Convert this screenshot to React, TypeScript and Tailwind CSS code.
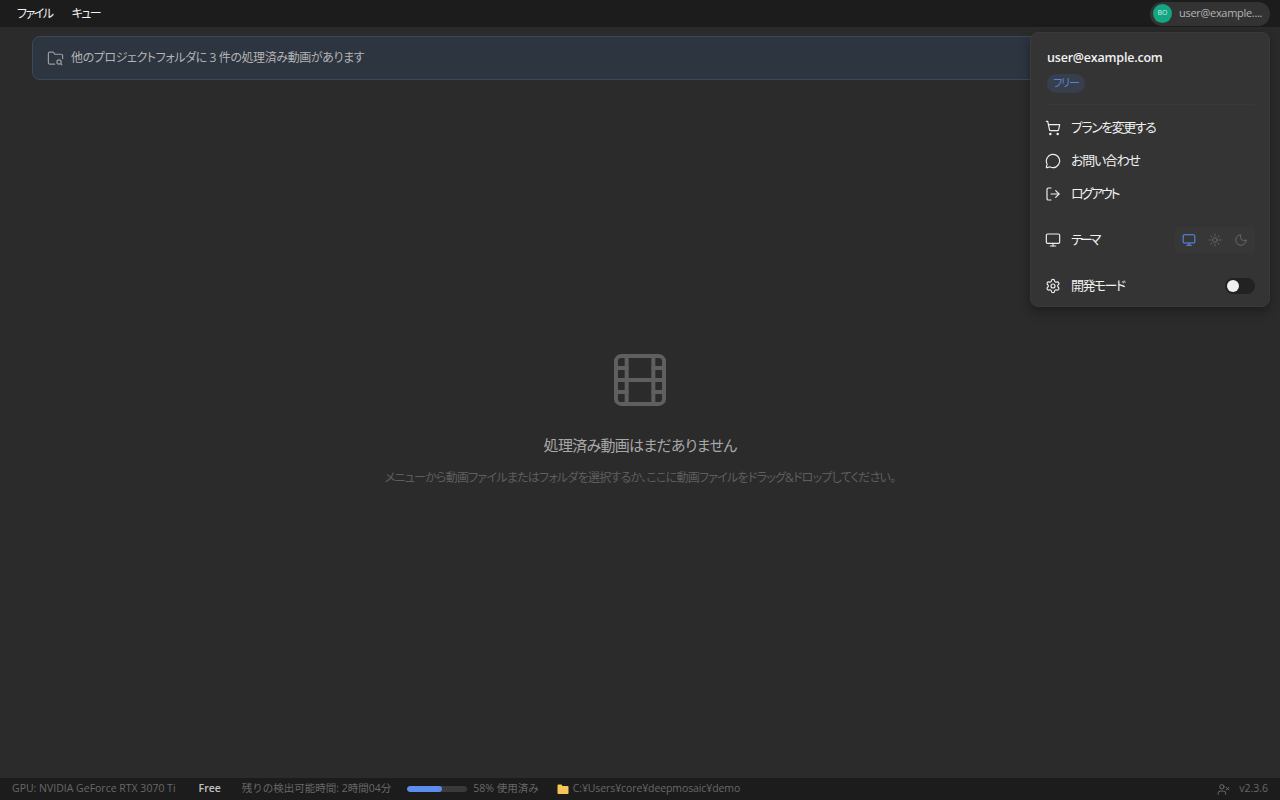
import { Film, FolderSearch, LogOut, MessageCircle, Monitor, Moon, Settings, ShoppingCart, Sun, UserX } from "lucide-react";

const font = "font-['Open_Sans','Noto_Sans_CJK_JP',sans-serif]";

function MenuRow({ icon, label, fit }: { icon: React.ReactNode; label: string; fit: string }) {
  return (
    <div className="flex h-[33px] items-center gap-[10px] text-[13px] text-[#f0f0f0] [font-feature-settings:'palt']">
      {icon}
      <span className={fit}>{label}</span>
    </div>
  );
}

export default function App() {
  return (
    <div className={`relative flex h-[800px] w-[1280px] flex-col overflow-hidden bg-[#2b2b2b] ${font}`}>
      <header className="flex h-[27px] shrink-0 items-center justify-between bg-[#1c1c1c] pl-[17px] pr-[10px]">
        <nav className="flex gap-[19px] text-[12px] tracking-[-1.5px] text-[#f2f2f2] [font-feature-settings:'palt']">
          <span>ファイル</span>
          <span>キュー</span>
        </nav>
        <div className="flex h-[24px] w-[120px] items-center gap-[7px] rounded-full bg-[#333333] pl-[3px]">
          <div className="flex h-[19px] w-[19px] items-center justify-center rounded-full bg-[#14a583] text-[7px] text-[#cfeee6]">
            BO
          </div>
          <span className="text-[11px] tracking-[-0.3px] text-[#b5b5b5]">user@example....</span>
        </div>
      </header>

      <main className="flex min-h-0 flex-1 flex-col px-[32px] pt-[9px]">
        <div className="flex h-[44px] shrink-0 items-center gap-[7px] rounded-lg border border-[#3a4a5e] bg-[#2d3540] pl-[14px] text-[12px] tracking-[-0.4px] text-[#b4b4b4] [font-feature-settings:'palt']">
          <FolderSearch className="h-[17px] w-[17px] text-[#9a9a9a]" strokeWidth={1.75} />
          <span>他のプロジェクトフォルダに 3 件の処理済み動画があります</span>
        </div>

        <div className="flex flex-col items-center pt-[268px]">
          <Film className="h-16 w-16 text-[#5f5f5f]" strokeWidth={1.5} />
          <h2 className="mt-[21px] text-[15px] leading-[24px] tracking-[-0.7px] text-[#a8a8a8] [font-feature-settings:'palt']">
            処理済み動画はまだありません
          </h2>
          <p className="mt-[12px] text-[12px] leading-[18px] tracking-[-0.75px] text-[#5e5e5e] [font-feature-settings:'palt']">
            メニューから動画ファイルまたはフォルダを選択するか、ここに動画ファイルをドラッグ&amp;ドロップしてください。
          </p>
        </div>
      </main>

      <footer className="flex h-[22px] shrink-0 items-center bg-[#1c1c1c] pl-[12px] pr-[12px] text-[10.5px] text-[#686868]">
        <span>GPU: NVIDIA GeForce RTX 3070 Ti</span>
        <span className="ml-[23px] font-semibold text-[#c4c4c4]">Free</span>
        <span className="ml-[21px]">残りの検出可能時間: 2時間04分</span>
        <div className="ml-[16px] h-[6px] w-[60px] overflow-hidden rounded-full bg-[#3a3a3a]">
          <div className="h-full w-[58%] rounded-full bg-[#5b8def]" />
        </div>
        <span className="ml-[6px]">58% 使用済み</span>
        <svg className="ml-[18px] h-[12px] w-[12px]" viewBox="0 0 12 12">
          <path d="M0.5 2.5a1 1 0 0 1 1-1h3l1 1.5h5a1 1 0 0 1 1 1v6a1 1 0 0 1-1 1h-9a1 1 0 0 1-1-1z" fill="#f6c65b" />
        </svg>
        <span className="ml-[4px] tracking-[-0.1px]">C:¥Users¥core¥deepmosaic¥demo</span>
        <div className="ml-auto flex items-center gap-[9px]">
          <UserX className="h-[13px] w-[13px] text-[#7c7c7c]" strokeWidth={1.5} />
          <span>v2.3.6</span>
        </div>
      </footer>

      <div className="absolute left-[1030px] top-[32px] flex h-[275px] w-[240px] flex-col rounded-lg border border-[#3a3a3a] bg-[#343434] px-[14px] pt-[15px] shadow-[0_4px_12px_rgba(0,0,0,0.35)]">
        <div className="pl-[2px] text-[12.5px] font-semibold leading-[20px] tracking-[-0.2px] text-[#f0f0f0]">user@example.com</div>
        <div className="mt-[6px] ml-[2px] flex h-[19px] w-[38px] items-center justify-center rounded-full bg-[#383f4c] text-[11px] tracking-[-1px] text-[#5b82d8] [font-feature-settings:'palt']">
          フリー
        </div>
        <div className="mt-[11px] border-t border-[#383838] pt-[6px]">
          <MenuRow fit="tracking-[-1.5px]" icon={<ShoppingCart className="h-[16px] w-[16px]" strokeWidth={1.75} />} label="プランを変更する" />
          <MenuRow fit="tracking-[-1.3px]" icon={<MessageCircle className="h-[16px] w-[16px]" strokeWidth={1.75} />} label="お問い合わせ" />
          <MenuRow fit="tracking-[-2.2px]" icon={<LogOut className="h-[16px] w-[16px]" strokeWidth={1.75} />} label="ログアウト" />
        </div>
        <div className="mt-[13px] flex h-[33px] items-center justify-between text-[13px] text-[#f0f0f0] [font-feature-settings:'palt']">
          <div className="flex items-center gap-[10px]">
            <Monitor className="h-[16px] w-[16px]" strokeWidth={1.75} />
            <span className="tracking-[-2.9px]">テーマ</span>
          </div>
          <div className="flex h-[26px] w-[80px] items-center justify-around rounded bg-[#373737] px-[1px]">
            <Monitor className="h-[14px] w-[14px] text-[#5b8def]" strokeWidth={1.75} />
            <Sun className="h-[14px] w-[14px] text-[#6e6e6e]" strokeWidth={1.5} />
            <Moon className="h-[14px] w-[14px] text-[#6e6e6e]" strokeWidth={1.5} />
          </div>
        </div>
        <div className="mt-[13px] flex h-[33px] items-center justify-between text-[13px] text-[#f0f0f0] [font-feature-settings:'palt']">
          <div className="flex items-center gap-[10px]">
            <Settings className="h-[16px] w-[16px]" strokeWidth={1.75} />
            <span className="tracking-[-1.6px]">開発モード</span>
          </div>
          <div className="flex h-[16px] w-[30px] items-center rounded-full bg-[#222222] pl-[2px]">
            <div className="h-[12px] w-[12px] rounded-full bg-[#f0f0f0]" />
          </div>
        </div>
      </div>
    </div>
  );
}
